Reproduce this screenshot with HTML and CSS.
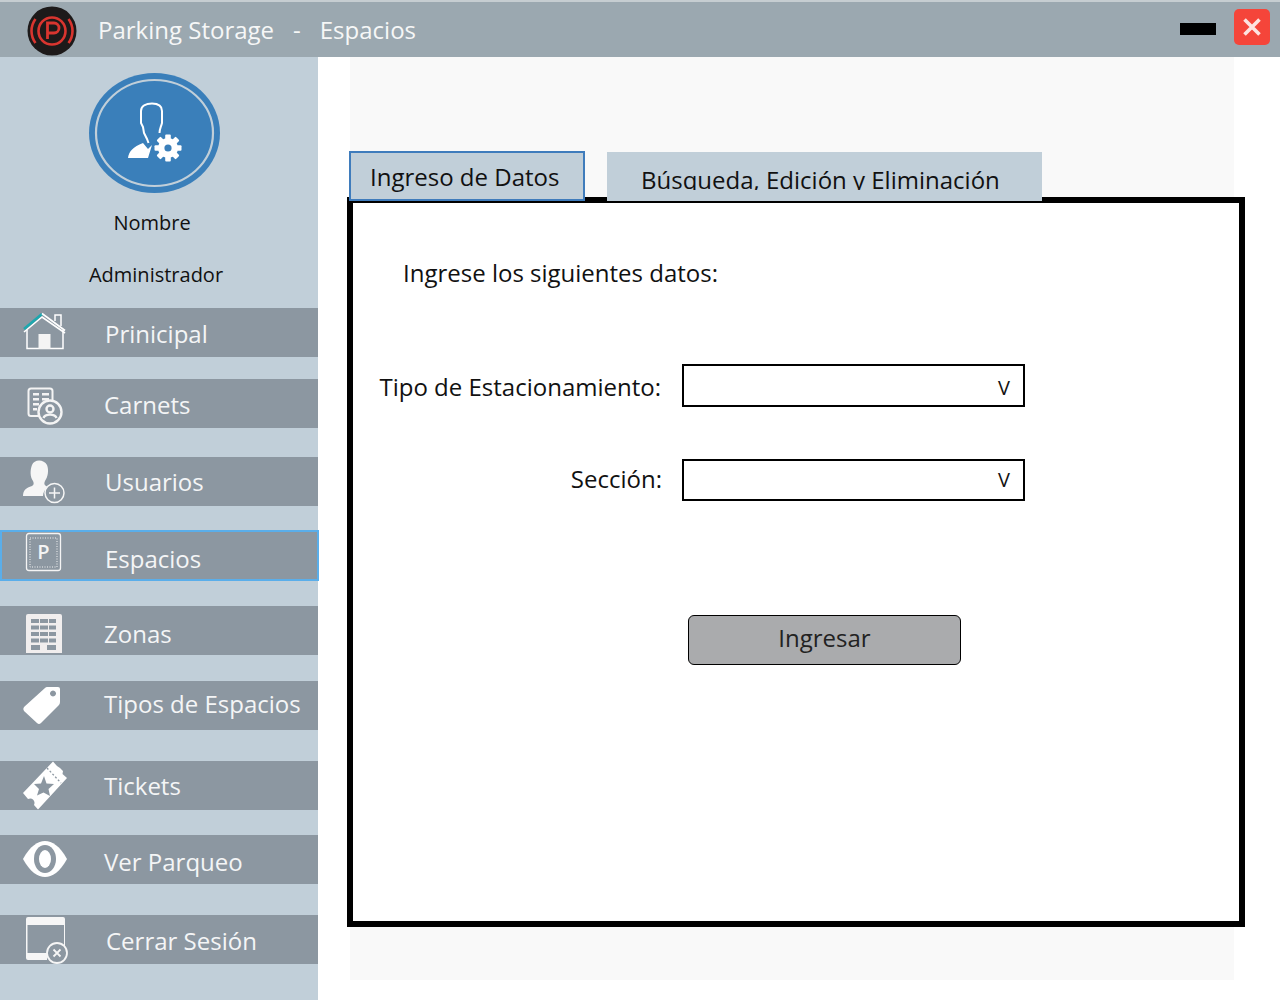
FILE: index.html
```html
<!DOCTYPE html>
<html lang="es">
<head>
<meta charset="utf-8">
<title>Parking Storage - Espacios</title>
<link rel="stylesheet" href="styles.css">
</head>
<body>
<div class="app">
  <header class="topbar">
    <svg class="logo" width="50" height="50" viewBox="0 0 50 50">
      <circle cx="25" cy="25" r="24.5" fill="#1d1a1a"/>
      <g fill="none" stroke="#d9352f" stroke-width="2.600">
        <circle cx="25" cy="25" r="13.5"/>
        <path d="M8.5 13 A20 20 0 0 0 8.5 37"/>
        <path d="M41.5 13 A20 20 0 0 1 41.5 37"/>
      </g>
      <path d="M20.5 33V17h6.5a5 5 0 0 1 0 10h-6.5" fill="none" stroke="#d9352f" stroke-width="2.800"/>
    </svg>
    <h1 class="title"><span>Parking Storage</span><span class="dash">-</span><span>Espacios</span></h1>
    <div class="minimize"></div>
    <div class="close">
      <svg width="36" height="36" viewBox="0 0 36 36"><path d="M10.500 10.500L25.500 25.500M25.500 10.500L10.500 25.500" stroke="#fde3e0" stroke-width="3.600" fill="none"/></svg>
    </div>
  </header>
  <div class="body-row">
    <aside class="sidebar">
      <div class="profile">
        <svg class="avatar" width="132" height="122" viewBox="0 0 132 122">
          <ellipse cx="65.500" cy="60" rx="65.500" ry="60" fill="#3a7fba"/>
          <ellipse cx="65.500" cy="60" rx="58.500" ry="53" fill="#3a7fba" stroke="#c1cfd9" stroke-width="2.200"/>
          <path d="M70.500 60C70.500 56 72 54 73 50V38C73 33 69 30.500 63 30.500C57 30.500 52 33 52 38V50L54 54L55 60L58 66L59.500 70" fill="none" stroke="#fff" stroke-width="2"/>
          <path d="M39 85C40 78 44 74 54 70L59 76L63 72L59 85Z" fill="#fff"/>
          <g transform="translate(79 75)">
            <g fill="#fff">
              <circle r="10"/>
              <rect x="-2.800" y="-13.500" width="5.600" height="27" rx="1"/>
              <rect x="-2.800" y="-13.500" width="5.600" height="27" rx="1" transform="rotate(45)"/>
              <rect x="-2.800" y="-13.500" width="5.600" height="27" rx="1" transform="rotate(90)"/>
              <rect x="-2.800" y="-13.500" width="5.600" height="27" rx="1" transform="rotate(135)"/>
            </g>
            <circle r="3.600" fill="#3a7fba"/>
          </g>
        </svg>
        <div class="profile-name">Nombre</div>
        <div class="profile-role">Administrador</div>
      </div>
      <nav class="nav">
        <a class="nav-item nav-principal">
          <svg class="nav-icon" width="104" height="49" viewBox="0 0 104 49">
            <path d="M27 22V40.500H63V22" fill="none" stroke="#fff" stroke-width="1.500"/>
            <path d="M38.500 41V26H50.500V41Z" fill="#f4f4f4"/>
            <path d="M24 24L42 9L65 25" fill="none" stroke="#fff" stroke-width="1.600"/>
            <path d="M24 21L42 6" fill="none" stroke="#1ea7ae" stroke-width="2.600"/>
            <path d="M42 5.500L65 22.500" fill="none" stroke="#fff" stroke-width="1.600"/>
            <path d="M55 13V7H61V18" fill="none" stroke="#fff" stroke-width="1.500"/>
          </svg>
          <span class="nav-text">Prinicipal</span>
        </a>
        <a class="nav-item nav-carnets">
          <svg class="nav-icon" width="104" height="49" viewBox="0 0 104 49">
            <path d="M40 37H31Q28.500 37 28.500 34.500V12Q28.500 9.500 31 9.500H50Q52.500 9.500 52.500 12V22" fill="none" stroke="#f4f4f4" stroke-width="2"/>
            <path d="M33 14h6v2.500h-6zM42 14h7v2.500h-7zM33 19h6v2.500h-6zM42 19h7v2.500h-7zM33 24h6v2.500h-6zM33 29h4v2.500h-4z" fill="#f4f4f4"/>
            <circle cx="50" cy="33" r="11.500" fill="#8c97a1" stroke="#f4f4f4" stroke-width="2.400"/>
            <circle cx="50" cy="30" r="3.500" fill="none" stroke="#f4f4f4" stroke-width="2.400"/>
            <path d="M43.500 39C45 34.500 55 34.500 56.500 39" fill="none" stroke="#f4f4f4" stroke-width="2.400"/>
          </svg>
          <span class="nav-text">Carnets</span>
        </a>
        <a class="nav-item nav-usuarios">
          <svg class="nav-icon" width="104" height="49" viewBox="0 0 104 49">
            <path d="M23 39C23 33 26 31 32 29C34 28 34 26 33 24C30 20 30 13 32 8C34 2 44 2 47 8C49 13 48 20 45 24C44 26 44 28 46 29L49 30C45 32 43 35 43 39Z" fill="#f6f6f6"/>
            <circle cx="54.500" cy="36" r="9.500" fill="#8c97a1" stroke="#f6f6f6" stroke-width="1.500"/>
            <path d="M54.500 30.500V41.500M49 36H60" stroke="#f6f6f6" stroke-width="1.500"/>
          </svg>
          <span class="nav-text">Usuarios</span>
        </a>
        <a class="nav-item nav-espacios">
          <svg class="nav-icon" width="104" height="49" viewBox="0 0 104 49">
            <rect x="26.500" y="2.500" width="34" height="37" rx="2.500" fill="none" stroke="#f4f4f4" stroke-width="1.300"/>
            <rect x="30" y="7" width="27" height="29" fill="none" stroke="#f4f4f4" stroke-width="1" stroke-dasharray="1 1.500"/>
            <text class="p-glyph" x="43.500" y="28" text-anchor="middle">P</text>
          </svg>
          <span class="nav-text">Espacios</span>
        </a>
        <a class="nav-item nav-zonas">
          <svg class="nav-icon" width="104" height="49" viewBox="0 0 104 49">
            <path d="M28 8H60Q62 8 62 10V47H26V10Q26 8 28 8Z" fill="#f1eeee"/>
            <path d="M31 13h8v4h-8zM40 13h8v4h-8zM49 13h7v4h-7zM31 19.500h8v4h-8zM40 19.500h8v4h-8zM49 19.500h7v4h-7zM31 26h8v4h-8zM40 26h8v4h-8zM49 26h7v4h-7zM31 32.500h8v4h-8zM40 32.500h8v4h-8zM49 32.500h7v4h-7zM31 39h9v5h-9zM47 39h9v5h-9z" fill="#8c97a1"/>
          </svg>
          <span class="nav-text">Zonas</span>
        </a>
        <a class="nav-item nav-tipos">
          <svg class="nav-icon" width="104" height="49" viewBox="0 0 104 49">
            <path fill-rule="evenodd" fill="#fff" d="M47 6H58Q60 6 60 8V21Q60 23 58.500 24.500L41 42Q39 44 37 42L24 30Q22.500 28 24 26L45 7Q46 6 47 6ZM53 9.500a3 3 0 1 0 0.010 0Z"/>
          </svg>
          <span class="nav-text">Tipos de Espacios</span>
        </a>
        <a class="nav-item nav-tickets">
          <svg class="nav-icon" width="104" height="49" viewBox="0 0 104 49">
            <path fill="#fff" d="M53 0.500L57 5L60 7L63 10L62.500 13L67 17L38 48.500L34 44C36 40 32 36 28 38L23 32Z"/>
            <path d="M47 7L61 22" stroke="#8c97a1" stroke-width="1.300" stroke-dasharray="2 2" fill="none"/>
            <path fill="#8c97a1" d="M44 15L46.500 22.500L54 23L48.500 28L50 35L43.500 31.500L37 34.500L39 28L34 23L41 22.500Z"/>
          </svg>
          <span class="nav-text">Tickets</span>
        </a>
        <a class="nav-item nav-ver">
          <svg class="nav-icon" width="104" height="49" viewBox="0 0 104 49">
            <path fill="#fff" d="M23 24C30 11 38 6 45 6C52 6 60 11 67 24C60 37 52 42 45 42C38 42 30 37 23 24Z"/>
            <ellipse cx="45" cy="24" rx="11" ry="14" fill="#8c97a1"/>
            <ellipse cx="45" cy="24" rx="6" ry="9" fill="#fff"/>
          </svg>
          <span class="nav-text">Ver Parqueo</span>
        </a>
        <a class="nav-item nav-cerrar">
          <svg class="nav-icon" width="104" height="49" viewBox="0 0 104 49">
            <path fill="#f6f6f6" fill-rule="evenodd" d="M28 2H63Q65 2 65 4V36H47V45H28Q26 45 26 43V4Q26 2 28 2ZM27.500 10V38H64V10Z"/>
            <circle cx="57" cy="38" r="10" fill="#8c97a1" stroke="#f6f6f6" stroke-width="1.800"/>
            <path d="M53.500 34.500L60.500 41.500M60.500 34.500L53.500 41.500" stroke="#f6f6f6" stroke-width="1.800"/>
          </svg>
          <span class="nav-text">Cerrar Sesión</span>
        </a>
      </nav>
    </aside>
    <main class="main">
      <div class="canvas">
        <div class="tabs">
          <div class="tab tab-active"><span class="tab-label">Ingreso de Datos</span></div>
          <div class="tab tab-other"><span class="tab-label">Búsqueda, Edición y Eliminación</span></div>
        </div>
        <section class="panel">
          <p class="lead">Ingrese los siguientes datos:</p>
          <div class="field field-tipo">
            <label class="field-label">Tipo de Estacionamiento:</label>
            <div class="select"><span class="select-arrow">V</span></div>
          </div>
          <div class="field field-seccion">
            <label class="field-label">Sección:</label>
            <div class="select"><span class="select-arrow">V</span></div>
          </div>
          <button class="submit">Ingresar</button>
        </section>
      </div>
    </main>
  </div>
</div>
</body>
</html>
```
FILE: styles.css
```css
* { box-sizing: border-box; }
html, body { margin: 0; padding: 0; height: 1000px; overflow: hidden; background: #fff; }
body { font-family: "Open Sans", "Liberation Sans", sans-serif; color: #111; }
.app { display: flex; flex-direction: column; width: 1280px; height: 1000px; }

.topbar {
  display: flex; align-items: center; height: 57px; flex: none;
  background: #9ba8b0; border-top: 2px solid #c6cdd1; padding: 0 10px 0 27px;
}
.logo { flex: none; margin-top: 3px; }
.title {
  display: flex; flex: 1; margin: 0 0 0 21px; font-size: 24px; font-weight: 400;
  color: #f6f7f7; line-height: 32px;
}
.dash { margin: 0 19px; }
.minimize { width: 36px; height: 12px; background: #000; margin-right: 18px; margin-top: -1px; }
.close { width: 36px; height: 36px; background: #f5453a; border-radius: 5px; margin-top: -5px; }
.close svg { display: block; }

.body-row { display: flex; flex: 1; min-height: 0; }
.sidebar { width: 318px; flex: none; background: #c1cfd9; }
.profile { height: 251px; display: flex; flex-direction: column; }
.avatar { display: block; margin: 16px 0 0 89px; flex: none; }
.profile-name, .profile-role { font-size: 20px; line-height: 28px; color: #111; text-align: center; }
.profile-name { margin: 14px 0 0 -14px; width: 332px; }
.profile-role { margin: 24px 0 0 -6px; width: 324px; }

.nav { display: flex; flex-direction: column; }
.nav-item {
  display: flex; align-items: center; height: 49px; background: #8c97a1; color: #f4f5f6;
  font-size: 24px; flex: none;
}
.nav-icon { flex: none; overflow: visible; display: block; }
.nav-text { line-height: 32px; white-space: nowrap; }
.nav-principal .nav-text { margin: 3px 0 0 1px; }
.nav-carnets { margin-top: 22px; }
.nav-carnets .nav-text { margin-top: 2px; }
.nav-usuarios { margin-top: 29px; }
.nav-usuarios .nav-text { margin: 0 0 0 1px; }
.nav-espacios {
  margin-top: 24px; height: 51px; width: 319px; border: 2px solid #5aaeea;
}
.nav-espacios .nav-icon { margin-left: -2px; margin-right: 1px; }
.nav-espacios .nav-text { margin-top: 6px; }
.nav-zonas { margin-top: 25px; }
.nav-zonas .nav-text { margin-top: 6px; }
.nav-tipos { margin-top: 26px; }
.nav-tipos .nav-text { margin-top: -3px; }
.nav-tickets { margin-top: 31px; }
.nav-ver { margin-top: 25px; }
.nav-ver .nav-text { margin-top: 5px; }
.nav-cerrar { margin-top: 31px; }
.nav-cerrar .nav-text { margin: 2px 0 0 2px; }
.p-glyph { font-family: "Open Sans", sans-serif; font-size: 20px; font-weight: 600; fill: #f4f4f4; }

.main { flex: 1; min-width: 0; }
.canvas { width: 884px; height: 923px; margin-left: 32px; background: #f9f9f9; padding-top: 94px; }
.tabs { display: flex; align-items: flex-end; position: relative; z-index: 1; margin-left: -1px; height: 50px; }
.tab { background: #c1cfd9; overflow: hidden; font-size: 24px; line-height: 32px; color: #111; }
.tab-active { width: 236px; height: 50px; border: 2px solid #3f7cbc; padding: 8px 0 0 19px; }
.tab-other { width: 435px; height: 49px; margin-left: 22px; padding: 12px 0 0 34px; }
.tab-label { white-space: nowrap; display: block; }
.tab-other .tab-label { height: 26px; overflow: hidden; }

.panel {
  position: relative; margin: -4px 0 0 -3px; width: 898px; height: 730px;
  border: 6px solid #000; background: #fff;
  padding: 54px 0 0 50px;
}
.lead { margin: 0; font-size: 24px; line-height: 32px; }
.field { display: flex; align-items: center; margin-left: -50px; }
.field-label { width: 309px; text-align: right; font-size: 24px; line-height: 32px; margin-right: 20px; flex: none; }
.field-tipo { margin-top: 75px; }
.field-tipo .field-label { margin-top: 2px; width: 308px; margin-right: 21px; }
.field-seccion { margin-top: 52px; }
.field-seccion .field-label { margin-bottom: 2px; }
.select {
  width: 343px; height: 43px; border: 2px solid #000; background: #fff;
  display: flex; align-items: center; justify-content: flex-end; padding-right: 13px;
  font-size: 20px;
}
.field-seccion .select { height: 42px; }
.field-tipo .select-arrow { margin-top: 4px; }
.field-seccion .select-arrow { margin-bottom: 2px; }
.submit {
  display: block; margin: 114px 0 0 285px; width: 273px; height: 50px;
  border: 1.500px solid #000; border-radius: 6px; background: #aaabad; font: inherit;
  font-size: 24px; color: #222; padding: 0 0 5px 0;
}
```
